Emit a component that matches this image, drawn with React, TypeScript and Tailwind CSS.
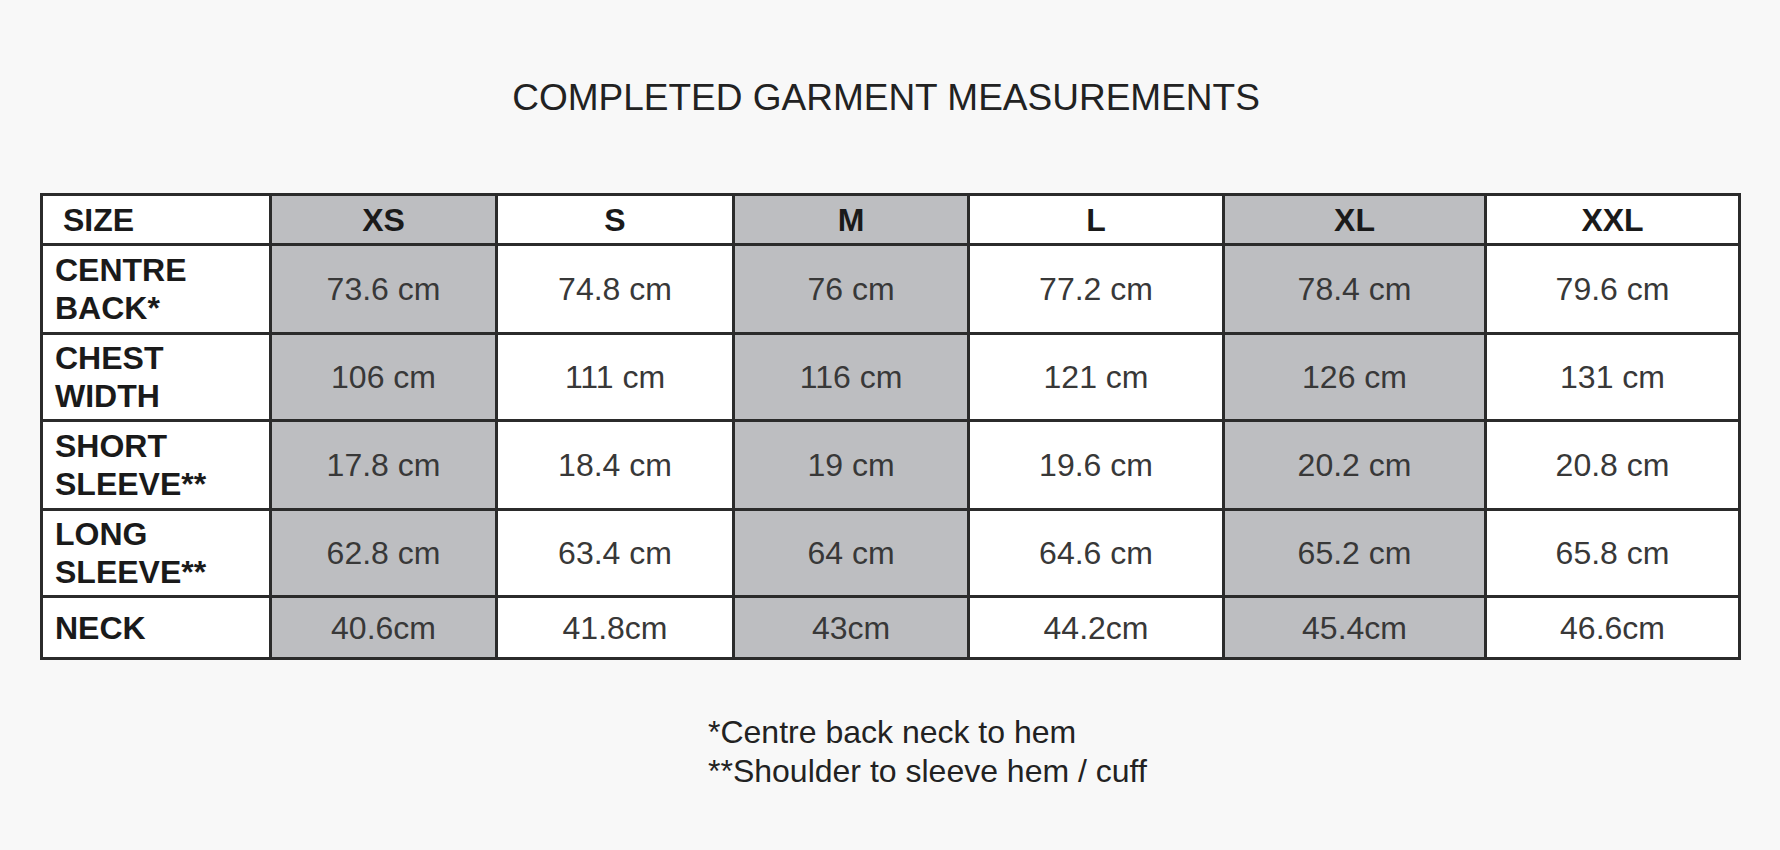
const sizes = [
  { label: "XS", shaded: true },
  { label: "S", shaded: false },
  { label: "M", shaded: true },
  { label: "L", shaded: false },
  { label: "XL", shaded: true },
  { label: "XXL", shaded: false },
]

const rows = [
  { label: ["CENTRE", "BACK*"], height: "h-[89px]", values: ["73.6 cm", "74.8 cm", "76 cm", "77.2 cm", "78.4 cm", "79.6 cm"] },
  { label: ["CHEST", "WIDTH"], height: "h-[87px]", values: ["106 cm", "111 cm", "116 cm", "121 cm", "126 cm", "131 cm"] },
  { label: ["SHORT", "SLEEVE**"], height: "h-[89px]", values: ["17.8 cm", "18.4 cm", "19 cm", "19.6 cm", "20.2 cm", "20.8 cm"] },
  { label: ["LONG", "SLEEVE**"], height: "h-[87px]", values: ["62.8 cm", "63.4 cm", "64 cm", "64.6 cm", "65.2 cm", "65.8 cm"] },
  { label: ["NECK"], height: "h-[62px]", values: ["40.6cm", "41.8cm", "43cm", "44.2cm", "45.4cm", "46.6cm"] },
]

const cell = "border-r-[3px] border-b-[3px] border-[#2b2b2b] flex items-center"

export default function App() {
  return (
    <div
      className="min-h-[850px] w-[1780px] bg-[#f8f8f8] pt-[76px]"
      style={{ fontFamily: '"Liberation Sans", Arial, sans-serif' }}
    >
      <h1 className="text-center text-[37px] leading-[44px] text-[#222] ml-[-8px]">COMPLETED GARMENT MEASUREMENTS</h1>

      <div className="mt-[73px] ml-[40px] w-[1701px] border-t-[3px] border-l-[3px] border-[#2b2b2b] grid grid-cols-[229px_226px_237px_235px_255px_262px_254px]">
        {/* header row */}
        <div className={`${cell} h-[50px] bg-white pl-[20px] text-[32px] font-bold text-[#1a1a1a]`}>SIZE</div>
        {sizes.map((s) => (
          <div
            key={s.label}
            className={`${cell} h-[50px] justify-center text-[32px] font-bold text-[#1a1a1a] ${s.shaded ? "bg-[#bdbec1]" : "bg-white"}`}
          >
            {s.label}
          </div>
        ))}

        {rows.map((r) => (
          <div key={r.label.join(" ")} className="contents">
            <div className={`${cell} ${r.height} bg-white pl-[12px] text-[32px] leading-[38px] font-bold text-[#1a1a1a]`}>
              <div>
                {r.label.map((l) => (
                  <div key={l}>{l}</div>
                ))}
              </div>
            </div>
            {r.values.map((v, i) => (
              <div
                key={v}
                className={`${cell} ${r.height} justify-center text-[32px] text-[#383838] ${sizes[i].shaded ? "bg-[#bdbec1]" : "bg-white"}`}
              >
                {v}
              </div>
            ))}
          </div>
        ))}
      </div>

      <div className="mt-[53px] pl-[708px] text-[32px] leading-[39px] text-[#222]">
        <p>*Centre back neck to hem</p>
        <p>**Shoulder to sleeve hem / cuff</p>
      </div>
    </div>
  )
}
